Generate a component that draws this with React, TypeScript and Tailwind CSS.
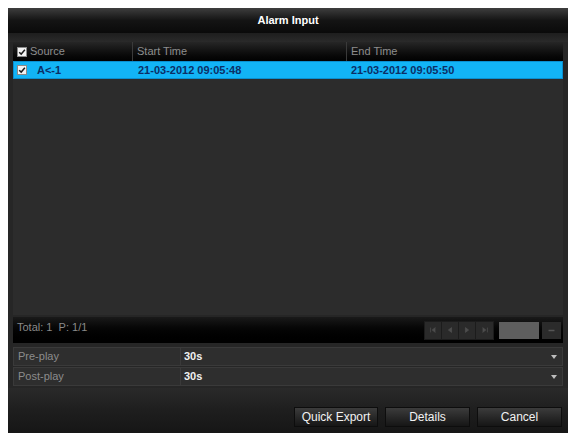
const Check = () => (
  <span className="flex h-[10px] w-[10px] items-center justify-center border border-[#8a8a8a] bg-[#f2f2f2]">
    <svg viewBox="0 0 10 10" className="h-[8px] w-[8px]">
      <path d="M1.5 5.2 L4 7.6 L8.6 2.2" fill="none" stroke="#1a1a1a" strokeWidth="1.8" />
    </svg>
  </span>
);

const PageBtn = ({ d }: { d: string }) => (
  <span className="flex h-[17px] w-[17px] items-center justify-center border-r border-[#1c1c1c] bg-[#2a2a2a] last:border-r-0">
    <svg viewBox="0 0 10 10" className="h-[8px] w-[8px]">
      <path d={d} fill="#4d4d4d" stroke="#4d4d4d" strokeWidth="1" />
    </svg>
  </span>
);

const FormRow = ({ label }: { label: string }) => (
  <div className="flex h-[19px] border border-[#3a3a3a] bg-[#2e2e2e]">
    <div className="flex w-[167px] items-center border-r border-[#3a3a3a] pl-[4px] text-[11px] text-[#8c8c8c]">{label}</div>
    <div className="flex flex-1 items-center justify-between pl-[3px] pr-[5px] text-[11px] font-bold text-[#f0f0f0]">
      <span>30s</span>
      <svg viewBox="0 0 6 4" className="h-[4px] w-[6px]">
        <path d="M0 0 L6 0 L3 4 Z" fill="#bdbdbd" />
      </svg>
    </div>
  </div>
);

const Button = ({ children, w }: { children: React.ReactNode; w: string }) => (
  <button className={`${w} h-[20px] border border-[#0d0d0d] bg-gradient-to-b from-[#3c3c3c] to-[#161616] text-[12px] text-[#f2f2f2]`}>
    {children}
  </button>
);

export default function App() {
  return (
    <div className="h-[437px] w-[576px] bg-white pl-[8px] pt-[8px] font-['Liberation_Sans',Arial,sans-serif]">
      <div className="flex h-[425px] w-[560px] flex-col bg-[#262626]">
        {/* title */}
        <div className="flex h-[25px] items-center justify-center bg-gradient-to-b from-[#3e3e3e] via-[#141414] to-[#0a0a0a] text-[11px] font-bold text-white">
          Alarm Input
        </div>
        <div className="h-[9px] bg-gradient-to-b from-[#1e1e1e] to-[#2a2a2a]" />

        <div className="mx-[5px] flex flex-col">
          {/* table */}
          <div className="flex h-[273px] flex-col bg-[#2c2c2c]">
            <div className="flex h-[19px] bg-gradient-to-b from-[#262626] to-[#020202] text-[11px] text-[#8e8e8e]">
              <div className="flex w-[120px] items-center gap-[3px] border-r border-[#3a3a3a] pl-[4px]">
                <Check />
                <span>Source</span>
              </div>
              <div className="flex w-[214px] items-center border-r border-[#3a3a3a] pl-[4px]">Start Time</div>
              <div className="flex flex-1 items-center pl-[4px]">End Time</div>
            </div>
            <div className="flex h-[18px] border border-[#0a8fd0] bg-[#12b4f6] text-[11px] font-bold text-[#0b2f66]">
              <div className="flex w-[120px] items-center gap-[10px] pl-[3px]">
                <Check />
                <span>A&lt;-1</span>
              </div>
              <div className="flex w-[214px] items-center pl-[4px]">21-03-2012 09:05:48</div>
              <div className="flex flex-1 items-center pl-[3px]">21-03-2012 09:05:50</div>
            </div>
          </div>

          {/* footer */}
          <div className="mt-[2px] flex h-[26px] items-center justify-between bg-gradient-to-b from-[#1a1a1a] to-[#000000] pl-[4px] pr-[2px] text-[11px] text-[#8a8a8a]">
            <span className="-mt-[6px]">Total: 1&nbsp;&nbsp;P: 1/1</span>
            <div className="flex items-center">
              <div className="flex border border-[#1c1c1c]">
                <PageBtn d="M2 2 V8 M8 2 L4 5 L8 8" />
                <PageBtn d="M7 2 L3 5 L7 8 Z" />
                <PageBtn d="M3 2 L7 5 L3 8 Z" />
                <PageBtn d="M8 2 V8 M2 2 L6 5 L2 8" />
              </div>
              <span className="ml-[5px] h-[17px] w-[40px] bg-[#5e5e5e]" />
              <span className="ml-[3px] flex h-[17px] w-[19px] items-center justify-center bg-[#2b2b2b]">
                <svg viewBox="0 0 8 4" className="h-[3px] w-[7px]">
                  <path d="M0 2 H8" stroke="#555" strokeWidth="2" />
                </svg>
              </span>
            </div>
          </div>

          {/* form */}
          <div className="mt-[4px] flex flex-col gap-[1px]">
            <FormRow label="Pre-play" />
            <FormRow label="Post-play" />
          </div>
        </div>

        {/* buttons */}
        <div className="mt-[2px] flex flex-1 items-start justify-end gap-[7px] bg-gradient-to-b from-[#2a2a2a] via-[#1e1e1e] to-[#161616] pr-[6px] pt-[19px]">
          <Button w="w-[84px]">Quick Export</Button>
          <Button w="w-[85px]">Details</Button>
          <Button w="w-[85px]">Cancel</Button>
        </div>
      </div>
    </div>
  );
}
